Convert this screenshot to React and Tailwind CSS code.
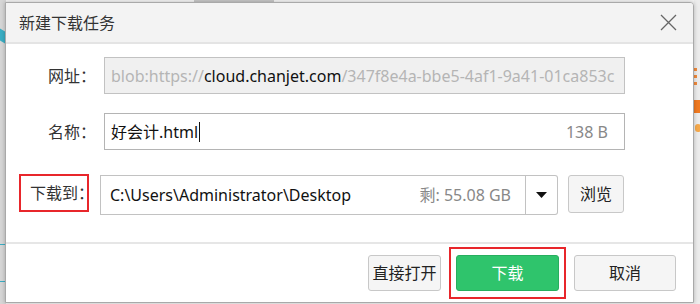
export default function App() {
  const font = { fontFamily: '"Noto Sans", "Noto Sans CJK SC", sans-serif' };
  return (
    <div className="relative w-[700px] h-[304px] overflow-hidden bg-[#f4f4f4]" style={font}>
      {/* background desktop bits */}
      <div className="absolute left-0 top-0 w-[6px] h-[304px] bg-[#d6d6d6]" />
      <div className="absolute left-0 top-[30px] w-[5px] h-[12px] bg-[#3aaec4] skew-y-[30deg]" />
      <div className="absolute left-0 top-[244px] w-[6px] h-[1px] bg-[#3aaec4]" />
      <div className="absolute left-0 top-[281px] w-[6px] h-[1px] bg-[#3aaec4]" />
      <div className="absolute left-[694px] top-0 w-[6px] h-[304px] bg-[#ececec]" />
      <div className="absolute left-[694px] top-[68px] w-[3px] h-[3px] bg-[#f08a3c]" />
      <div className="absolute left-[694px] top-[75px] w-[3px] h-[3px] bg-[#f08a3c]" />
      <div className="absolute left-[694px] top-[82px] w-[3px] h-[3px] bg-[#f08a3c]" />
      <div className="absolute left-[694px] top-[100px] w-[6px] h-[13px] bg-[#f07a22]" />
      <div className="absolute left-[695px] top-[124px] w-[6px] h-[8px] rounded-full bg-[#f5a84a]" />
      <div className="absolute left-[194px] top-0 w-[80px] h-[2px] bg-[#c8c8c8]" />

      {/* dialog */}
      <div className="absolute left-[5px] top-[2px] w-[689px] h-[301px] border border-[#a9a9a9] rounded-tr-[4px] bg-white shadow-[0_0_4px_rgba(0,0,0,0.25)] flex flex-col overflow-hidden">
        {/* title bar */}
        <div className="h-[41px] shrink-0 bg-[#f3f3f3] border-b-2 border-[#e4e4e4] flex items-center justify-between pl-[13px] pr-[15px]">
          <span className="text-[16px] leading-none text-[#333]">新建下载任务</span>
          <svg width="17" height="17" viewBox="0 0 17 17" className="mr-[1px]">
            <path d="M1 1 L16 16 M16 1 L1 16" stroke="#666" strokeWidth="1.3" fill="none" />
          </svg>
        </div>

        {/* body */}
        <div className="flex flex-col">
          {/* row 1 */}
          <div className="flex items-center mt-[13px] h-[37px]">
            <div className="w-[90px] text-right text-[16px] leading-none text-[#333]">网址：</div>
            <div className="ml-[8px] w-[521px] h-[37px] border border-[#c2c2c2] bg-[#f0f0f0] flex items-center pl-[6px] overflow-hidden whitespace-nowrap text-[16px] leading-none">
              <span className="text-[#b5b5b5]">blob:https://</span>
              <span className="text-[#111]">cloud.chanjet.com</span>
              <span className="text-[#b5b5b5]">/347f8e4a-bbe5-4af1-9a41-01ca853c</span>
            </div>
          </div>

          {/* row 2 */}
          <div className="flex items-center mt-[19px] h-[37px]">
            <div className="w-[90px] text-right text-[16px] leading-none text-[#333]">名称：</div>
            <div className="ml-[8px] w-[521px] h-[37px] border border-[#b4b4b4] bg-white flex items-center justify-between pl-[6px] pr-[16px] text-[16px] leading-none">
              <span className="flex items-center text-[#111]">
                好会计.html
                <span className="ml-[1px] w-[1px] h-[20px] bg-[#111]" />
              </span>
              <span className="text-[#888]">138 B</span>
            </div>
          </div>

          {/* row 3 */}
          <div className="flex items-center mt-[25px] h-[40px]">
            <div className="ml-[13px] w-[70px] h-[38px] border-2 border-[#e8262b] flex items-center pl-[9px] whitespace-nowrap text-[16px] leading-none text-[#333] -mt-[4px]">
              下载到：
            </div>
            <div className="ml-[11px] flex h-[40px]">
              <div className="w-[426px] h-[40px] border border-[#c2c2c2] bg-white flex items-center justify-between pl-[9px] pr-[14px] text-[16px] leading-none">
                <span className="text-[#111]">C:\Users\Administrator\Desktop</span>
                <span className="text-[#888]">剩: 55.08 GB</span>
              </div>
              <div className="w-[32px] h-[40px] border border-l-0 border-[#c2c2c2] rounded-r-[3px] bg-white flex items-center justify-center">
                <svg width="11" height="6" viewBox="0 0 11 6">
                  <path d="M0 0 L11 0 L5.5 6 Z" fill="#111" />
                </svg>
              </div>
            </div>
            <div className="ml-[10px] w-[56px] h-[38px] -mt-[2px] border border-[#c8c8c8] rounded-[3px] bg-[#f5f5f5] flex items-center justify-center text-[16px] leading-none text-[#222]">
              浏览
            </div>
          </div>
        </div>

        {/* footer */}
        <div className="mt-[27px] border-t-2 border-[#e6e6e6] flex-1 flex items-center justify-end gap-[8px] pr-[17px]">
          <div className="w-[73px] h-[36px] border border-[#c8c8c8] rounded-[3px] bg-[#f5f5f5] flex items-center justify-center text-[16px] leading-none text-[#222]">
            直接打开
          </div>
          <div className="w-[117px] h-[52px] border-2 border-[#e8262b] flex items-center justify-center">
            <div className="w-[103px] h-[36px] border border-[#27ae5e] rounded-[3px] bg-[#2fc46c] flex items-center justify-center text-[16px] leading-none text-white">
              下载
            </div>
          </div>
          <div className="w-[102px] h-[36px] border border-[#c8c8c8] rounded-[3px] bg-[#f5f5f5] flex items-center justify-center text-[16px] leading-none text-[#222]">
            取消
          </div>
        </div>
      </div>
    </div>
  );
}
